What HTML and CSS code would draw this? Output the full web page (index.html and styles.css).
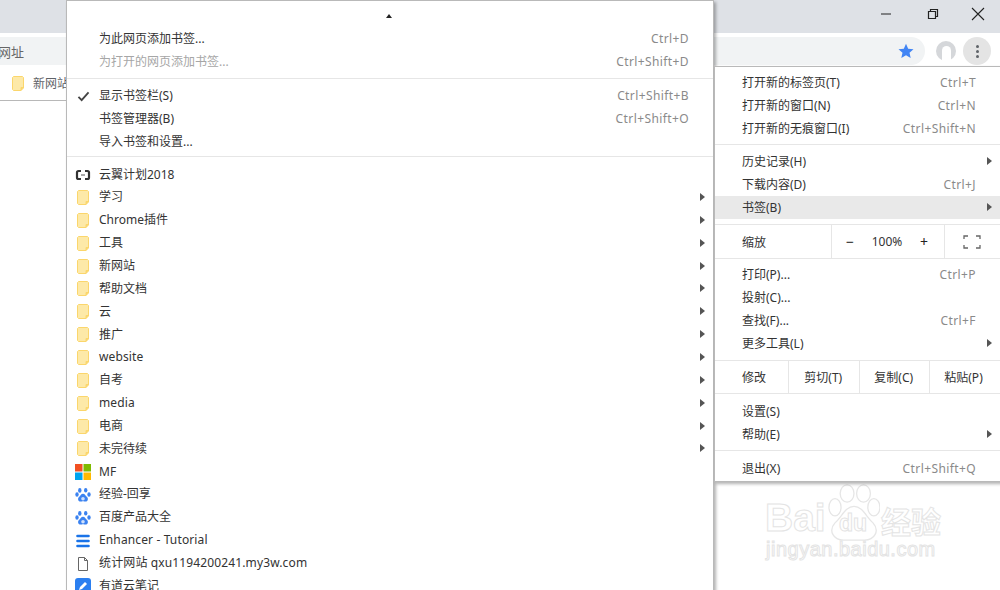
FILE: index.html
```html
<!DOCTYPE html>
<html lang="zh-CN">
<head>
<meta charset="utf-8">
<title>Chrome 书签菜单</title>
<link rel="stylesheet" href="styles.css">
</head>
<body>
<svg class="defs" width="0" height="0" aria-hidden="true">
  <symbol id="folder" viewBox="0 0 12 15">
    <path d="M1.500 .5H10.500L11.500 1.500V12L9 14.500H1.500L.5 13.500V1.500Z" fill="#fde9a8" stroke="#fbd66c"/>
    <path d="M11.500 11.500H9V14.500" fill="#fbd66c" stroke="#fbd66c"/>
  </symbol>
  <symbol id="paw" viewBox="0 0 16 16">
    <g fill="#3b82f0">
      <ellipse cx="4.800" cy="3.400" rx="1.700" ry="2.300"/>
      <ellipse cx="10.700" cy="3.300" rx="1.700" ry="2.300"/>
      <ellipse cx="2" cy="7.500" rx="1.700" ry="2.200"/>
      <ellipse cx="14" cy="7.500" rx="1.700" ry="2.200"/>
      <path d="M8 6.700C6 6.700 5.500 8.700 4 10C2.500 11.300 2.800 14.600 5.500 14.600C6.800 14.600 7 14.200 8 14.200C9 14.200 9.400 14.600 10.600 14.600C13.200 14.600 13.500 11.300 12 10C10.500 8.700 10 6.700 8 6.700Z"/>
    </g>
    <ellipse cx="8" cy="11.800" rx="1.800" ry="1.700" fill="#cfe0fb"/>
  </symbol>
</svg>

<div class="window">
  <header class="titlebar">
    <svg class="winctl" viewBox="0 0 14 14"><path d="M0 7H10" stroke="#222" fill="none"/></svg>
    <svg class="winctl" viewBox="0 0 14 14"><path d="M2.500 4.500H9.500V11.500H2.500ZM4.500 4.500V2.500H11.500V9.500H9.500" stroke="#222" stroke-width="1.200" fill="none"/></svg>
    <svg class="winctl" viewBox="0 0 14 14"><path d="M1 1L13 13M13 1L1 13" stroke="#222" stroke-width="1.100" fill="none"/></svg>
  </header>
  <div class="toolbar">
    <div class="omnibox">
      <span class="omni-text">网址</span>
      <svg class="star" viewBox="0 0 16 16"><path d="M8 .8L10.200 5.700L15.500 6.200L11.500 9.700L12.700 15L8 12.200L3.300 15L4.500 9.700L.5 6.200L5.800 5.700Z" fill="#4285f4"/></svg>
    </div>
    <div class="avatar"><span class="avatar-hole"></span></div>
    <div class="kebab"><i></i><i></i><i></i></div>
  </div>
  <div class="bookmarkbar">
    <svg class="bar-folder"><use href="#folder"/></svg>
    <span class="bar-label">新网站</span>
  </div>

  <div class="watermark" aria-hidden="true">
    <svg class="wm-paw" viewBox="0 0 60 66">
      <g fill="#fff" stroke="#e6e6e6" stroke-width="1.500">
        <ellipse cx="22" cy="11" rx="8" ry="10"/>
        <ellipse cx="41" cy="11" rx="8" ry="10"/>
        <ellipse cx="8" cy="27" rx="7" ry="10"/>
        <ellipse cx="53" cy="27" rx="7" ry="10"/>
        <path d="M30 26C20 26 16 38 8 45C0 54 6 65 18 65H42C54 65 60 54 52 45C44 38 40 26 30 26Z"/>
      </g>
    </svg>
    <span class="wm-bai">Bai</span><span class="wm-du">du</span><span class="wm-cn">经验</span>
    <span class="wm-url">jingyan.baidu.com</span>
  </div>

  <nav class="menu bookmarks">
    <div class="scroll-arrow"></div>
    <div class="row"><span class="label">为此网页添加书签...</span><span class="key">Ctrl+D</span></div>
    <div class="row muted"><span class="label">为打开的网页添加书签...</span><span class="key">Ctrl+Shift+D</span></div>
    <div class="sep sep-a"></div>
    <div class="row"><svg class="check" viewBox="0 0 14 12"><path d="M1.500 6.500L5 10L12.500 1.500" stroke="#444" stroke-width="2" fill="none"/></svg><span class="label">显示书签栏(S)</span><span class="key">Ctrl+Shift+B</span></div>
    <div class="row"><span class="label">书签管理器(B)</span><span class="key">Ctrl+Shift+O</span></div>
    <div class="row"><span class="label">导入书签和设置...</span></div>
    <div class="sep sep-b"></div>
    <div class="row"><svg class="ico" viewBox="0 0 16 16"><path d="M6 4H3.500Q2 4 2 5.500V10.500Q2 12 3.500 12H6M10 4H12.500Q14 4 14 5.500V10.500Q14 12 12.500 12H10" stroke="#333" stroke-width="2.200" fill="none"/><path d="M6 8H10" stroke="#555" fill="none"/></svg><span class="label">云翼计划2018</span></div>
    <div class="row"><svg class="ico folder"><use href="#folder"/></svg><span class="label">学习</span><i class="arrow"></i></div>
    <div class="row"><svg class="ico folder"><use href="#folder"/></svg><span class="label">Chrome插件</span><i class="arrow"></i></div>
    <div class="row"><svg class="ico folder"><use href="#folder"/></svg><span class="label">工具</span><i class="arrow"></i></div>
    <div class="row"><svg class="ico folder"><use href="#folder"/></svg><span class="label">新网站</span><i class="arrow"></i></div>
    <div class="row"><svg class="ico folder"><use href="#folder"/></svg><span class="label">帮助文档</span><i class="arrow"></i></div>
    <div class="row"><svg class="ico folder"><use href="#folder"/></svg><span class="label">云</span><i class="arrow"></i></div>
    <div class="row"><svg class="ico folder"><use href="#folder"/></svg><span class="label">推广</span><i class="arrow"></i></div>
    <div class="row"><svg class="ico folder"><use href="#folder"/></svg><span class="label latin">website</span><i class="arrow"></i></div>
    <div class="row"><svg class="ico folder"><use href="#folder"/></svg><span class="label">自考</span><i class="arrow"></i></div>
    <div class="row"><svg class="ico folder"><use href="#folder"/></svg><span class="label latin">media</span><i class="arrow"></i></div>
    <div class="row"><svg class="ico folder"><use href="#folder"/></svg><span class="label">电商</span><i class="arrow"></i></div>
    <div class="row"><svg class="ico folder"><use href="#folder"/></svg><span class="label">未完待续</span><i class="arrow"></i></div>
    <div class="row"><svg class="ico" viewBox="0 0 16 16"><rect width="7.500" height="7.500" fill="#f25022"/><rect x="8.500" width="7.500" height="7.500" fill="#7fba00"/><rect y="8.500" width="7.500" height="7.500" fill="#00a4ef"/><rect x="8.500" y="8.500" width="7.500" height="7.500" fill="#ffb900"/></svg><span class="label">MF</span></div>
    <div class="row"><svg class="ico"><use href="#paw"/></svg><span class="label">经验-回享</span></div>
    <div class="row"><svg class="ico"><use href="#paw"/></svg><span class="label">百度产品大全</span></div>
    <div class="row"><svg class="ico" viewBox="0 0 16 16"><path d="M2.500 3H13.500M2.500 8H13.500M2.500 13H13.500" stroke="#1a73e8" stroke-width="2.600" stroke-linecap="round" fill="none"/></svg><span class="label latin">Enhancer - Tutorial</span></div>
    <div class="row"><svg class="ico" viewBox="0 0 16 16"><path d="M3.500 1.500H9.500L12.500 4.500V14.500H3.500ZM9.500 1.500V4.500H12.500" stroke="#666" fill="none"/></svg><span class="label latin">统计网站 qxu1194200241.my3w.com</span></div>
    <div class="row"><svg class="ico" viewBox="0 0 16 16"><rect width="16" height="16" rx="3" fill="#2b7ff0"/><path d="M4 12L5 9L10 4L12 6L7 11Z" fill="#fff"/></svg><span class="label">有道云笔记</span></div>
  </nav>

  <nav class="menu app">
    <div class="row"><span class="label">打开新的标签页(T)</span><span class="key">Ctrl+T</span></div>
    <div class="row"><span class="label">打开新的窗口(N)</span><span class="key">Ctrl+N</span></div>
    <div class="row"><span class="label">打开新的无痕窗口(I)</span><span class="key">Ctrl+Shift+N</span></div>
    <div class="sep sep-c"></div>
    <div class="row"><span class="label">历史记录(H)</span><i class="arrow"></i></div>
    <div class="row"><span class="label">下载内容(D)</span><span class="key">Ctrl+J</span></div>
    <div class="row active"><span class="label">书签(B)</span><i class="arrow"></i></div>
    <div class="split zoom">
      <span class="cell cell-name">缩放</span>
      <span class="cell cell-zoom"><b>−</b><span>100%</span><b>+</b></span>
      <span class="cell cell-full"><svg class="fullscreen" viewBox="0 0 18 14"><path d="M1 4V1H5M13 1H17V4M17 10V13H13M5 13H1V10" stroke="#666" stroke-width="1.300" fill="none"/></svg></span>
    </div>
    <div class="row after-zoom"><span class="label">打印(P)...</span><span class="key">Ctrl+P</span></div>
    <div class="row"><span class="label">投射(C)...</span></div>
    <div class="row"><span class="label">查找(F)...</span><span class="key">Ctrl+F</span></div>
    <div class="row"><span class="label">更多工具(L)</span><i class="arrow"></i></div>
    <div class="split edit">
      <span class="cell cell-name">修改</span>
      <span class="cell cell-edit">剪切(T)</span>
      <span class="cell cell-edit">复制(C)</span>
      <span class="cell cell-edit">粘贴(P)</span>
    </div>
    <div class="row after-edit"><span class="label">设置(S)</span></div>
    <div class="row"><span class="label">帮助(E)</span><i class="arrow"></i></div>
    <div class="sep sep-d"></div>
    <div class="row"><span class="label">退出(X)</span><span class="key">Ctrl+Shift+Q</span></div>
  </nav>
</div>
</body>
</html>
```

FILE: styles.css
```css
* { box-sizing: border-box; }
html, body { margin: 0; padding: 0; background: #fff; }
body {
  font-family: "Noto Sans", "Noto Sans CJK SC", sans-serif;
  font-size: 12px;
  color: #333;
}
.defs { position: absolute; }
.window {
  position: relative;
  width: 1000px;
  height: 590px;
  overflow: hidden;
  background: #fff;
}
.titlebar {
  height: 33px;
  background: #dee1e6;
  display: flex;
  justify-content: flex-end;
  align-items: flex-start;
  gap: 31px;
  padding: 7px 15px 0 0;
}
.winctl { width: 14px; height: 14px; display: block; }
.toolbar {
  height: 32px;
  padding-top: 4px;
  display: flex;
  align-items: flex-start;
}
.omnibox {
  width: 925px;
  height: 28px;
  background: #f1f3f4;
  border-radius: 0 14px 14px 0;
  display: flex;
  align-items: center;
  justify-content: space-between;
  padding-right: 11px;
  color: #666;
  font-size: 13px;
}
.omni-text { margin-left: -2px; }
.star { width: 16px; height: 16px; display: block; }
.avatar {
  width: 20px;
  height: 20px;
  margin: 4px 0 0 11px;
  border-radius: 50%;
  background: #d5d7da;
  display: flex;
  justify-content: center;
  align-items: flex-end;
}
.avatar-hole {
  width: 9px;
  height: 15px;
  background: #fff;
  border-radius: 5px 5px 1px 1px;
}
.kebab {
  width: 28px;
  height: 28px;
  margin-left: 7px;
  border-radius: 50%;
  background: #e4e4e4;
  display: flex;
  flex-direction: column;
  align-items: center;
  justify-content: center;
  gap: 2px;
}
.kebab i {
  width: 3px;
  height: 3px;
  border-radius: 50%;
  background: #5f6368;
}
.bookmarkbar {
  height: 36px;
  display: flex;
  align-items: center;
  padding: 1px 0 0 12px;
  border-bottom: 1px solid #b8b8b8;
  color: #5f6368;
}
.bar-folder { width: 12px; height: 15px; display: block; }
.bar-label { margin-left: 9px; }

.menu {
  position: absolute;
  background: #fff;
  border: 1px solid #b9b9b9;
  box-shadow: 2px 2px 3px rgba(0, 0, 0, .3);
}
.bookmarks {
  left: 66px;
  top: 0;
  width: 648px;
  height: 592px;
  padding-top: 27px;
}
.app {
  left: 714px;
  top: 66px;
  width: 287px;
  height: 416px;
  padding-top: 4px;
}
.scroll-arrow {
  position: absolute;
  left: 319px;
  top: 13px;
  border: 3.500px solid transparent;
  border-top: 0;
  border-bottom: 4px solid #222;
}
.row {
  position: relative;
  height: 23px;
  display: flex;
  align-items: center;
  justify-content: space-between;
  padding: 0 24px 0 32px;
  white-space: nowrap;
  line-height: 16px;
}
.bookmarks .row { height: 22.85px; }
.app .row { padding: 0 24px 0 27px; }
.row.active { background: #e9e9e9; }
.row.muted .label { color: #a6a6a6; }
.key { color: #8a8a8a; letter-spacing: .4px; }
.latin { letter-spacing: .13px; }
.check {
  position: absolute;
  left: 10px;
  top: 6px;
  width: 13px;
  height: 11px;
}
.ico {
  position: absolute;
  left: 8px;
  top: 4px;
  width: 16px;
  height: 16px;
}
.ico.folder { left: 10px; width: 12px; height: 15px; }
.arrow {
  position: absolute;
  right: 8px;
  top: 7px;
  border: 4px solid transparent;
  border-right: 0;
  border-left: 5px solid #555;
}
.sep { border-top: 1px solid #e6e6e6; }
.sep-a { height: 7px; margin-top: 4px; }
.sep-b { height: 7px; margin-top: 3px; }
.sep-c { height: 6px; margin-top: 4px; }
.sep-d { height: 7px; margin-top: 4px; }
.split {
  display: flex;
  align-items: stretch;
  border-top: 1px solid #e6e6e6;
  border-bottom: 1px solid #e6e6e6;
}
.zoom { height: 35px; margin-top: 5px; }
.edit { height: 34px; margin-top: 5px; }
.cell {
  display: flex;
  align-items: center;
  justify-content: center;
  border-left: 1px solid #e6e6e6;
}
.cell-name { border-left: 0; justify-content: flex-start; padding-left: 27px; }
.zoom .cell-name { width: 116px; }
.cell-zoom { width: 113px; justify-content: space-between; padding: 0 16px 0 14px; }
.cell-zoom b { font-weight: 400; font-size: 14px; color: #222; }
.cell-full { flex: 1; padding-right: 2px; }
.fullscreen { width: 18px; height: 14px; display: block; }
.edit .cell-name { width: 73px; }
.cell-edit { width: 70.500px; padding-right: 1px; }
.cell-edit:last-child { flex: 1; padding-right: 3px; }
.after-zoom { margin-top: 4px; }
.after-edit { margin-top: 6px; }

.watermark {
  position: absolute;
  left: 765px;
  top: 484px;
  width: 235px;
  height: 106px;
  font-family: "Liberation Sans", sans-serif;
  color: #fff;
  -webkit-text-stroke: 1px #e4e4e4;
}
.wm-paw { position: absolute; left: 63px; top: 0; width: 52px; height: 57px; }
.wm-bai { position: absolute; left: 0; top: 12px; font-size: 39px; font-weight: 700; }
.wm-du { position: absolute; left: 74px; top: 26px; font-size: 23px; font-weight: 700; }
.wm-cn {
  position: absolute;
  left: 116px;
  top: 14px;
  font-size: 30px;
  font-family: "Noto Sans CJK SC", sans-serif;
  font-weight: 700;
}
.wm-url { position: absolute; left: 1px; top: 54px; font-size: 20px; letter-spacing: .5px; }
```
